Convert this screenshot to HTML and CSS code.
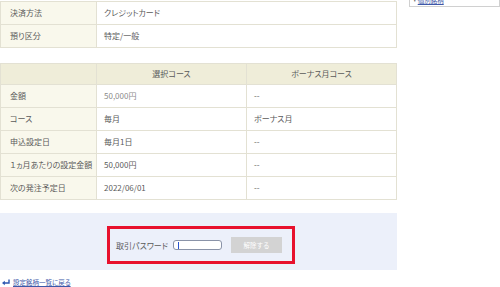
FILE: index.html
```html
<!DOCTYPE html>
<html lang="ja">
<head>
    <meta charset="UTF-8">
    <meta name="viewport" content="width=device-width, initial-scale=1.0">
    <title>積立設定解除</title>
    <link rel="stylesheet" href="styles.css">
</head>
<body>
    <div class="page">
        <main class="main">
            <table class="info">
                <colgroup>
                    <col class="c-label">
                    <col>
                </colgroup>
                <tr>
                    <th>決済方法</th>
                    <td>クレジットカード</td>
                </tr>
                <tr>
                    <th>預り区分</th>
                    <td>特定/一般</td>
                </tr>
            </table>

            <table class="course">
                <colgroup>
                    <col class="c-label">
                    <col class="c-main">
                    <col>
                </colgroup>
                <tr class="head">
                    <th></th>
                    <th>選択コース</th>
                    <th>ボーナス月コース</th>
                </tr>
                <tr>
                    <th>金額</th>
                    <td class="muted">50,000円</td>
                    <td>--</td>
                </tr>
                <tr>
                    <th>コース</th>
                    <td>毎月</td>
                    <td>ボーナス月</td>
                </tr>
                <tr>
                    <th>申込設定日</th>
                    <td>毎月1日</td>
                    <td>--</td>
                </tr>
                <tr>
                    <th>１ヵ月あたりの設定金額</th>
                    <td>50,000円</td>
                    <td>--</td>
                </tr>
                <tr>
                    <th>次の発注予定日</th>
                    <td>2022/06/01</td>
                    <td>--</td>
                </tr>
            </table>

            <div class="confirm">
                <div class="confirm-box">
                    <label for="pw">取引パスワード</label>
                    <span class="pw-input" id="pw"><span class="caret"></span></span>
                    <button type="button" class="btn-off" disabled>解除する</button>
                </div>
            </div>

            <p class="back">
                <svg width="8" height="7" viewBox="0 0 8 7">
                    <path d="M7 0.5 V4 H2" fill="none" stroke="#2a55b0" stroke-width="1.4"/>
                    <path d="M0 4 L2.8 1.8 V6.2 Z" fill="#2a55b0"/>
                </svg>
                <a href="#">設定銘柄一覧に戻る</a>
            </p>
        </main>

        <aside class="side">
            <div class="side-box">
                <a href="#">個別銘柄</a>
            </div>
        </aside>
    </div>
    <div class="foot"></div>
</body>
</html>
```

FILE: styles.css
```css
body{
    margin: 0;
    font-family: "Noto Sans CJK JP", "Liberation Sans", sans-serif;
    font-feature-settings: "palt";
    font-size: 8px;
    color: #5a5a5a;
    background-color: white;
    overflow: hidden;
}
.page{
    display: flex;
    align-items: flex-start;
}
.main{
    width: 398px;
}
table{
    width: 397px;
    border-collapse: collapse;
    table-layout: fixed;
}
.c-label{
    width: 96px;
}
.c-main{
    width: 150px;
}
th, td{
    border: 1px solid #e3e1d3;
    height: 22px;
    padding: 0 7px;
    font-weight: normal;
    text-align: left;
    line-height: 10px;
    white-space: nowrap;
}
th{
    padding-left: 9px;
    background-color: #f9f8ec;
}
.info{
    margin-top: 1px;
}
.course{
    margin-top: 15px;
}
.course .head th{
    height: 20px;
    padding: 0;
    text-align: center;
    background-color: #efedd9;
}
.muted{
    color: #8a8a8a;
}
.confirm{
    display: flex;
    justify-content: center;
    margin-top: 13px;
    padding: 13px 0 6px;
    width: 397px;
    background-color: #ecf0fa;
}
.confirm-box{
    display: flex;
    align-items: center;
    height: 32px;
    padding: 0 10px 0 6px;
    margin-left: 5px;
    border: 3px solid #e8112d;
}
.confirm-box label{
    width: 57px;
}
.pw-input{
    display: flex;
    align-items: center;
    width: 43px;
    height: 8px;
    padding: 0 2px;
    background-color: white;
    border: 1px solid #8a93a8;
    border-radius: 3px;
}
.caret{
    width: 1px;
    height: 7px;
    margin-left: 2px;
    background-color: #2a55d0;
}
.btn-off{
    width: 51px;
    height: 16px;
    margin-left: 9px;
    padding: 0;
    border: none;
    background-color: #d3d3d3;
    color: white;
    font-family: inherit;
    font-size: 6.5px;
}
.back{
    display: flex;
    align-items: center;
    margin: 7px 0 0 2px;
    font-size: 6.5px;
}
.back svg{
    margin-right: 3px;
}
a{
    color: #3e58a8;
}
.side{
    margin-left: 12px;
    width: 100px;
}
.side-box{
    margin-top: -5px;
    height: 11px;
    padding: 0 0 0 8px;
    border: 1px solid #d0d0d0;
    border-top: none;
    font-size: 6.5px;
    line-height: 10px;
}
.side-box::before{
    content: "・";
    margin-left: -5px;
    color: #666;
}
.foot{
    margin-top: 1px;
    height: 4px;
    border-top: 1px solid #ececec;
}
```
